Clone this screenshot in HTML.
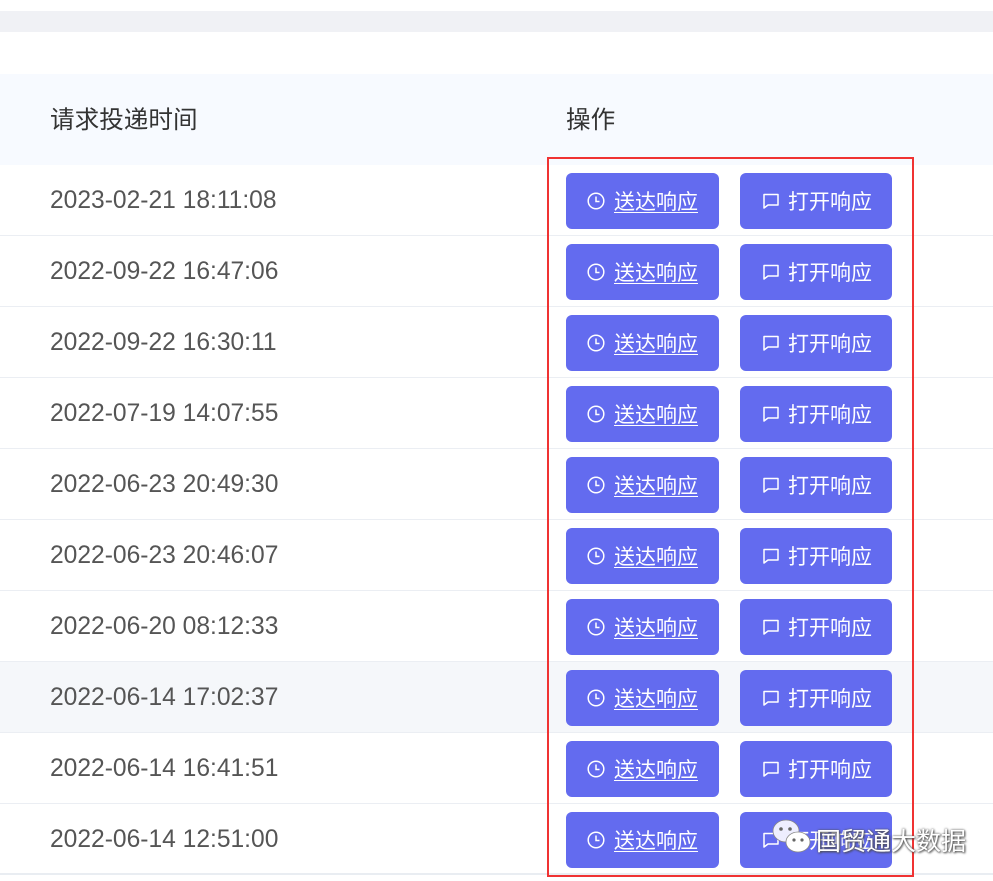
<!DOCTYPE html>
<html><head><meta charset="utf-8"><style>
*{margin:0;padding:0;box-sizing:border-box}
body{width:993px;height:881px;background:#fff;position:relative;overflow:hidden;font-family:"Liberation Sans","Noto Sans CJK SC",sans-serif}
.band{position:absolute;left:0;top:11px;width:993px;height:21px;background:#f0f1f5}
.head{position:absolute;left:0;top:74px;width:993px;height:91px;background:#f7faff;color:#333;font-size:24.6px}
.head span{position:absolute;top:26px}
.row{position:absolute;left:0;width:993px;height:71px;border-bottom:1px solid #ebeef3}
.row .t{position:absolute;left:50px;top:22px;font-size:24.6px;color:#555}
.btn{position:absolute;top:8px;height:56px;width:153px;background:#636bef;border-radius:6px;color:#fff;font-size:21px}
.btn svg{position:absolute;top:19px}
.btn span{position:absolute;top:13px}
.b1{left:566px}.b2{left:740px;width:152px}
.b1 span{left:48px;text-decoration:underline;text-underline-offset:3px;text-decoration-thickness:1px}
.b1 svg{left:21px}.b2 svg{left:22px}.b2 span{left:48px}
.red{position:absolute;left:547px;top:157px;width:367px;height:720px;border:2px solid #f03333}
.wm{position:absolute;left:816px;top:822px;font-size:25px;color:#fff;text-shadow:0 0 2px #555,1px 1px 2px #444}
</style></head><body>
<div class="band"></div>
<div class="head"><span style="left:50px">请求投递时间</span><span style="left:566px">操作</span></div>
<div class="row" style="top:165px"><div class="t">2023-02-21 18:11:08</div>
<div class="btn b1"><svg width="18" height="18" viewBox="0 0 18 18"><circle cx="9" cy="9" r="7.8" fill="none" stroke="#fff" stroke-width="1.5"/><path d="M9 4.5V9.5H12.5" fill="none" stroke="#fff" stroke-width="1.5"/></svg><span>送达响应</span></div>
<div class="btn b2"><svg width="18" height="18" viewBox="0 0 18 18"><path d="M2 2.5H16V13H6L2 16Z" fill="none" stroke="#fff" stroke-width="1.5" stroke-linejoin="round"/></svg><span>打开响应</span></div></div>
<div class="row" style="top:236px"><div class="t">2022-09-22 16:47:06</div>
<div class="btn b1"><svg width="18" height="18" viewBox="0 0 18 18"><circle cx="9" cy="9" r="7.8" fill="none" stroke="#fff" stroke-width="1.5"/><path d="M9 4.5V9.5H12.5" fill="none" stroke="#fff" stroke-width="1.5"/></svg><span>送达响应</span></div>
<div class="btn b2"><svg width="18" height="18" viewBox="0 0 18 18"><path d="M2 2.5H16V13H6L2 16Z" fill="none" stroke="#fff" stroke-width="1.5" stroke-linejoin="round"/></svg><span>打开响应</span></div></div>
<div class="row" style="top:307px"><div class="t">2022-09-22 16:30:11</div>
<div class="btn b1"><svg width="18" height="18" viewBox="0 0 18 18"><circle cx="9" cy="9" r="7.8" fill="none" stroke="#fff" stroke-width="1.5"/><path d="M9 4.5V9.5H12.5" fill="none" stroke="#fff" stroke-width="1.5"/></svg><span>送达响应</span></div>
<div class="btn b2"><svg width="18" height="18" viewBox="0 0 18 18"><path d="M2 2.5H16V13H6L2 16Z" fill="none" stroke="#fff" stroke-width="1.5" stroke-linejoin="round"/></svg><span>打开响应</span></div></div>
<div class="row" style="top:378px"><div class="t">2022-07-19 14:07:55</div>
<div class="btn b1"><svg width="18" height="18" viewBox="0 0 18 18"><circle cx="9" cy="9" r="7.8" fill="none" stroke="#fff" stroke-width="1.5"/><path d="M9 4.5V9.5H12.5" fill="none" stroke="#fff" stroke-width="1.5"/></svg><span>送达响应</span></div>
<div class="btn b2"><svg width="18" height="18" viewBox="0 0 18 18"><path d="M2 2.5H16V13H6L2 16Z" fill="none" stroke="#fff" stroke-width="1.5" stroke-linejoin="round"/></svg><span>打开响应</span></div></div>
<div class="row" style="top:449px"><div class="t">2022-06-23 20:49:30</div>
<div class="btn b1"><svg width="18" height="18" viewBox="0 0 18 18"><circle cx="9" cy="9" r="7.8" fill="none" stroke="#fff" stroke-width="1.5"/><path d="M9 4.5V9.5H12.5" fill="none" stroke="#fff" stroke-width="1.5"/></svg><span>送达响应</span></div>
<div class="btn b2"><svg width="18" height="18" viewBox="0 0 18 18"><path d="M2 2.5H16V13H6L2 16Z" fill="none" stroke="#fff" stroke-width="1.5" stroke-linejoin="round"/></svg><span>打开响应</span></div></div>
<div class="row" style="top:520px"><div class="t">2022-06-23 20:46:07</div>
<div class="btn b1"><svg width="18" height="18" viewBox="0 0 18 18"><circle cx="9" cy="9" r="7.8" fill="none" stroke="#fff" stroke-width="1.5"/><path d="M9 4.5V9.5H12.5" fill="none" stroke="#fff" stroke-width="1.5"/></svg><span>送达响应</span></div>
<div class="btn b2"><svg width="18" height="18" viewBox="0 0 18 18"><path d="M2 2.5H16V13H6L2 16Z" fill="none" stroke="#fff" stroke-width="1.5" stroke-linejoin="round"/></svg><span>打开响应</span></div></div>
<div class="row" style="top:591px"><div class="t">2022-06-20 08:12:33</div>
<div class="btn b1"><svg width="18" height="18" viewBox="0 0 18 18"><circle cx="9" cy="9" r="7.8" fill="none" stroke="#fff" stroke-width="1.5"/><path d="M9 4.5V9.5H12.5" fill="none" stroke="#fff" stroke-width="1.5"/></svg><span>送达响应</span></div>
<div class="btn b2"><svg width="18" height="18" viewBox="0 0 18 18"><path d="M2 2.5H16V13H6L2 16Z" fill="none" stroke="#fff" stroke-width="1.5" stroke-linejoin="round"/></svg><span>打开响应</span></div></div>
<div class="row" style="top:662px;background:#f5f7fa"><div class="t">2022-06-14 17:02:37</div>
<div class="btn b1"><svg width="18" height="18" viewBox="0 0 18 18"><circle cx="9" cy="9" r="7.8" fill="none" stroke="#fff" stroke-width="1.5"/><path d="M9 4.5V9.5H12.5" fill="none" stroke="#fff" stroke-width="1.5"/></svg><span>送达响应</span></div>
<div class="btn b2"><svg width="18" height="18" viewBox="0 0 18 18"><path d="M2 2.5H16V13H6L2 16Z" fill="none" stroke="#fff" stroke-width="1.5" stroke-linejoin="round"/></svg><span>打开响应</span></div></div>
<div class="row" style="top:733px"><div class="t">2022-06-14 16:41:51</div>
<div class="btn b1"><svg width="18" height="18" viewBox="0 0 18 18"><circle cx="9" cy="9" r="7.8" fill="none" stroke="#fff" stroke-width="1.5"/><path d="M9 4.5V9.5H12.5" fill="none" stroke="#fff" stroke-width="1.5"/></svg><span>送达响应</span></div>
<div class="btn b2"><svg width="18" height="18" viewBox="0 0 18 18"><path d="M2 2.5H16V13H6L2 16Z" fill="none" stroke="#fff" stroke-width="1.5" stroke-linejoin="round"/></svg><span>打开响应</span></div></div>
<div class="row" style="top:804px;border-bottom:2px solid #e9edf2"><div class="t">2022-06-14 12:51:00</div>
<div class="btn b1"><svg width="18" height="18" viewBox="0 0 18 18"><circle cx="9" cy="9" r="7.8" fill="none" stroke="#fff" stroke-width="1.5"/><path d="M9 4.5V9.5H12.5" fill="none" stroke="#fff" stroke-width="1.5"/></svg><span>送达响应</span></div>
<div class="btn b2"><svg width="18" height="18" viewBox="0 0 18 18"><path d="M2 2.5H16V13H6L2 16Z" fill="none" stroke="#fff" stroke-width="1.5" stroke-linejoin="round"/></svg><span>打开响应</span></div></div>
<div class="red"></div>
<svg style="position:absolute;left:771px;top:818px" width="44" height="38" viewBox="0 0 44 38"><ellipse cx="15" cy="13" rx="13" ry="11" fill="#eef" stroke="#888" stroke-width="0.8"/><circle cx="10" cy="11" r="1.8" fill="#666"/><circle cx="19" cy="11" r="1.8" fill="#666"/><ellipse cx="27" cy="24" rx="12" ry="10" fill="#fff" stroke="#888" stroke-width="0.8"/><circle cx="23" cy="22" r="1.6" fill="#666"/><circle cx="31" cy="22" r="1.6" fill="#666"/></svg>
<div class="wm">国贸通大数据</div>
</body></html>
